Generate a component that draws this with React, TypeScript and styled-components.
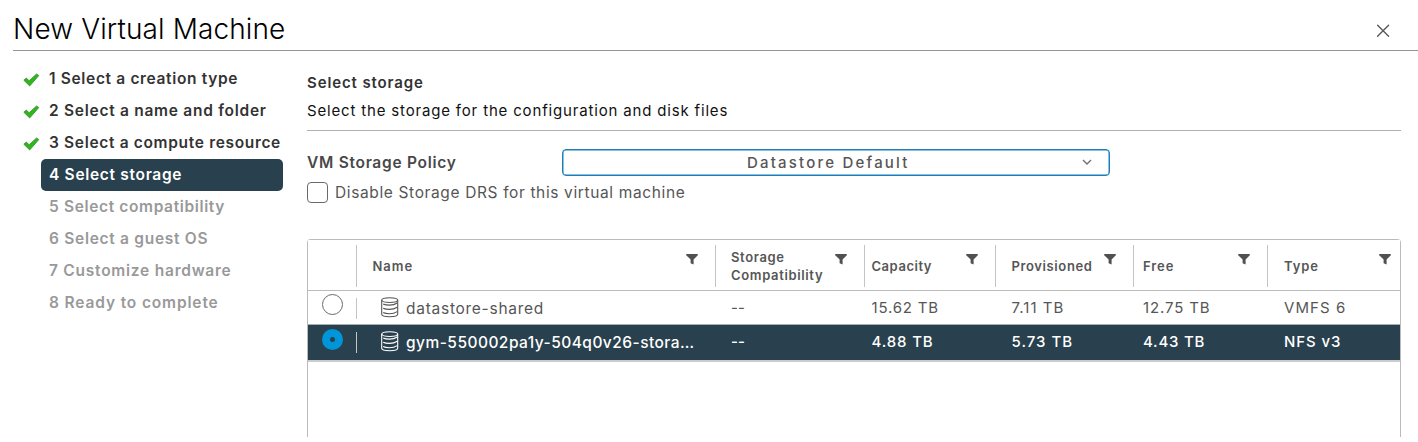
import React from 'react';
import styled, { createGlobalStyle } from 'styled-components';

const GlobalStyle = createGlobalStyle`
  * { box-sizing: border-box; }
  body {
    margin: 0;
    background: #fff;
    color: #565656;
    font-family: Inter, "Liberation Sans", sans-serif;
    overflow: hidden;
  }
`;

const Label = styled.span<{ $track?: number }>`
  letter-spacing: ${(p) => p.$track ?? 0.7}px;
  white-space: nowrap;
`;

const Dialog = styled.main`
  height: 437px;
  overflow: hidden;
  display: flex;
  flex-direction: column;
`;

const Header = styled.header`
  height: 51px;
  flex: none;
  margin-left: 13px;
  padding: 8px 27px 0 0;
  border-bottom: 1px solid #949494;
  display: flex;
  justify-content: space-between;
`;

const Title = styled.h1`
  margin: 0;
  font-size: 28px;
  line-height: 42px;
  font-weight: 300;
  color: #000;
`;

const CloseButton = styled.button`
  width: 16px;
  height: 16px;
  margin-top: 15px;
  padding: 0;
  border: 0;
  background: none;
  display: flex;
`;

const Body = styled.div`
  flex: 1;
  min-height: 0;
  display: flex;
`;

const Steps = styled.nav`
  width: 283px;
  flex: none;
  padding: 12px 0 0 23px;
`;

const Step = styled.div`
  height: 32px;
  display: flex;
  align-items: center;
`;

const StepMark = styled.span`
  width: 18px;
  padding-top: 1px;
  display: flex;
`;

type StepState = 'done' | 'current' | 'pending';
const stepColor = { done: '#333', current: '#fff', pending: '#999' };

const StepName = styled.span<{ $state: StepState }>`
  flex: 1;
  height: 32px;
  padding-left: 8px;
  border-radius: 5px;
  font-size: 15.5px;
  line-height: 32px;
  font-weight: 600;
  white-space: nowrap;
  color: ${(p) => stepColor[p.$state]};
  background: ${(p) => (p.$state === 'current' ? '#29404e' : 'transparent')};
`;

const Content = styled.section`
  flex: 1;
  min-width: 0;
  margin: 0 17px 0 24px;
  display: flex;
  flex-direction: column;
`;

const Intro = styled.div`
  height: 80px;
  flex: none;
  padding-top: 18px;
  border-bottom: 1px solid #b0b0b0;
`;

const Heading = styled.h2`
  margin: 0;
  font-size: 15px;
  line-height: 28px;
  font-weight: 600;
  color: #333;
`;

const Description = styled.p`
  margin: 0;
  font-size: 15px;
  line-height: 28px;
  color: #111;
`;

const PolicyRow = styled.div`
  height: 45px;
  flex: none;
  padding-top: 18px;
  display: flex;
`;

const PolicyName = styled.label`
  width: 255px;
  font-size: 15.5px;
  line-height: 27px;
  font-weight: 600;
  color: #484848;
`;

const Select = styled.div`
  width: 548px;
  height: 27px;
  padding: 0 17px 0 184px;
  border: 1px solid #1a80ba;
  box-shadow: inset 0 0 0 0.5px #1a80ba;
  border-radius: 4px;
  display: flex;
  align-items: center;
  justify-content: space-between;
  font-size: 15px;
  font-weight: 500;
  color: #565656;
`;

const CheckRow = styled.label`
  height: 32px;
  flex: none;
  display: flex;
  align-items: center;
  gap: 7px;
  font-size: 15.5px;
`;

const Checkbox = styled.span`
  width: 21px;
  height: 21px;
  border: 1.5px solid #6a6a6a;
  border-radius: 4px;
`;

const Table = styled.div`
  flex: 1;
  margin-top: 31px;
  border: 1px solid #bbb;
  border-bottom: 0;
  border-radius: 4px 4px 0 0;
`;

const Row = styled.div<{ $selected?: boolean }>`
  display: grid;
  grid-template-columns: 49px 359px 149px 131px 138px 134px 1fr;
  height: ${(p) => (p.$selected ? 35 : 34)}px;
  align-items: center;
  font-size: 15px;
  font-weight: ${(p) => (p.$selected ? 500 : 400)};
  color: ${(p) => (p.$selected ? '#fff' : '#565656')};
  background: ${(p) => (p.$selected ? '#29404e' : '#fff')};
  box-shadow: ${(p) => (p.$selected ? '0 2px 0 #ccc, 0 -1px 0 #a4adb2' : 'none')};
`;

const HeadRow = styled(Row)`
  height: 51px;
  padding: 5px 0 3px;
  align-items: stretch;
  border-bottom: 1px solid #bbb;
  font-size: 13px;
  line-height: 18px;
  font-weight: 600;
`;

const HeadCell = styled.div<{ $indent?: number; $end?: number }>`
  display: flex;
  justify-content: space-between;
  align-items: center;
  padding: 0 ${(p) => p.$end ?? 17}px 0 ${(p) => p.$indent ?? 16}px;
  border-right: 1px solid #c4c4c4;
  &:last-child { border-right: 0; }
`;

const HeadText = styled.span`
  display: flex;
  flex-direction: column;
`;

const FilterButton = styled.span`
  align-self: flex-start;
  margin-top: 9px;
  display: flex;
`;

const RadioCell = styled.div`
  height: 21px;
  padding-left: 14px;
  border-right: 1px solid #c4c4c4;
`;

const Radio = styled.span<{ $checked?: boolean }>`
  display: block;
  width: 21px;
  height: 21px;
  margin-top: ${(p) => (p.$checked ? -3 : -4)}px;
  border-radius: 50%;
  border: ${(p) => (p.$checked ? '8px solid #0095d8' : '1.5px solid #6a6a6a')};
`;

const NameCell = styled.div`
  display: flex;
  align-items: flex-start;
  gap: 7px;
  padding-left: 23px;
  font-size: 15.5px;
  line-height: 23px;
`;

const Cell = styled.div<{ $indent?: number }>`
  padding: 0 0 2px ${(p) => p.$indent ?? 16}px;
`;

const Check = () => (
  <svg width="17" height="14" viewBox="0 0 17 14">
    <path d="M.8 7.2 3.2 5l3 2.7L13.5 1l2.3 1.6L6.7 13z" fill="#31b51f" stroke="#238c16" strokeWidth=".7" strokeLinejoin="round" />
  </svg>
);

const Close = () => (
  <svg width="16" height="16" viewBox="0 0 16 16" stroke="#555" strokeWidth="1.3" strokeLinecap="round">
    <path d="m2.6 2.3 11 11M13.6 2.3l-11 11" />
  </svg>
);

const Chevron = () => (
  <svg width="10" height="7" viewBox="0 0 10 7" fill="none" stroke="#707070" strokeWidth="1.4">
    <path d="m1 1 4 4 4-4" />
  </svg>
);

const Filter = () => (
  <FilterButton>
    <svg width="12" height="11" viewBox="0 0 12 11" fill="#505050">
      <path d="M.2 0h11.6v1.2L7.6 5.4V10.6L4.6 9.3V5.4L.2 1.2z" />
    </svg>
  </FilterButton>
);

const Database = () => (
  <svg width="19" height="21" viewBox="0 0 19 21" fill="none" stroke="currentColor" strokeWidth="1.1">
    <ellipse cx="9.7" cy="3.1" rx="8" ry="2.4" />
    <path d="M1.7 3.1v14.2c0 1.4 3.6 2.4 8 2.4s8-1 8-2.4V3.1" />
    <path d="M3.2 6.9c1.4.8 3.7 1.2 6.3 1.2s5.5-.6 7.7-2.1M3.2 11.2c1.4.8 3.7 1.2 6.3 1.2s5.5-.6 7.7-2.1M3.2 15.5c1.4.8 3.7 1.2 6.3 1.2s5.5-.6 7.7-2.1" />
  </svg>
);

const steps: { name: string; state: StepState; track: number }[] = [
  { name: '1 Select a creation type', state: 'done', track: 0.66 },
  { name: '2 Select a name and folder', state: 'done', track: 0.73 },
  { name: '3 Select a compute resource', state: 'done', track: 0.67 },
  { name: '4 Select storage', state: 'current', track: 0.69 },
  { name: '5 Select compatibility', state: 'pending', track: 0.64 },
  { name: '6 Select a guest OS', state: 'pending', track: 0.71 },
  { name: '7 Customize hardware', state: 'pending', track: 0.76 },
  { name: '8 Ready to complete', state: 'pending', track: 0.86 },
];

const columns = [
  { lines: ['Name'], track: 0.95, indent: 15.5, end: 17 },
  { lines: ['Storage', 'Compatibility'], track: 0.65, indent: 15, end: 17 },
  { lines: ['Capacity'], track: 0.54, indent: 6.5, end: 17 },
  { lines: ['Provisioned'], track: 0.62, indent: 15.5, end: 17 },
  { lines: ['Free'], track: 0.95, indent: 9, end: 17 },
  { lines: ['Type'], track: 0.9, indent: 16, end: 9 },
];

const stores = [
  {
    name: 'datastore-shared', track: 0.73, selected: false,
    values: [['--', 0], ['15.62 TB', 0.82], ['7.11 TB', 1.05], ['12.75 TB', 0.87], ['VMFS 6', 1.1]] as [string, number][],
  },
  {
    name: 'gym-550002pa1y-504q0v26-stora…', track: 0.47, selected: true,
    values: [['--', 0], ['4.88 TB', 0.86], ['5.73 TB', 1], ['4.43 TB', 0.75], ['NFS v3', 0.92]] as [string, number][],
  },
];

export default function App() {
  return (
    <>
      <GlobalStyle />
      <Dialog>
        <Header>
          <Title><Label $track={0.12}>New Virtual Machine</Label></Title>
          <CloseButton aria-label="Close"><Close /></CloseButton>
        </Header>
        <Body>
          <Steps>
            {steps.map((s) => (
              <Step key={s.name}>
                <StepMark>{s.state === 'done' && <Check />}</StepMark>
                <StepName $state={s.state}><Label $track={s.track}>{s.name}</Label></StepName>
              </Step>
            ))}
          </Steps>
          <Content>
            <Intro>
              <Heading><Label $track={0.88}>Select storage</Label></Heading>
              <Description><Label $track={0.83}>Select the storage for the configuration and disk files</Label></Description>
            </Intro>
            <PolicyRow>
              <PolicyName><Label $track={0.72}>VM Storage Policy</Label></PolicyName>
              <Select><Label $track={2.2}>Datastore Default</Label><Chevron /></Select>
            </PolicyRow>
            <CheckRow>
              <Checkbox />
              <Label $track={0.63}>Disable Storage DRS for this virtual machine</Label>
            </CheckRow>
            <Table>
              <HeadRow>
                <HeadCell />
                {columns.map((c) => (
                  <HeadCell key={c.lines[0]} $indent={c.indent} $end={c.end}>
                    <HeadText>
                      {c.lines.map((l) => <Label key={l} $track={c.track}>{l}</Label>)}
                    </HeadText>
                    <Filter />
                  </HeadCell>
                ))}
              </HeadRow>
              {stores.map((s) => (
                <Row key={s.name} $selected={s.selected}>
                  <RadioCell><Radio $checked={s.selected} /></RadioCell>
                  <NameCell><Database /><Label $track={s.track}>{s.name}</Label></NameCell>
                  {s.values.map(([v, track], i) => (
                    <Cell key={i} $indent={columns[i + 1].indent}><Label $track={track}>{v}</Label></Cell>
                  ))}
                </Row>
              ))}
            </Table>
          </Content>
        </Body>
      </Dialog>
    </>
  );
}
